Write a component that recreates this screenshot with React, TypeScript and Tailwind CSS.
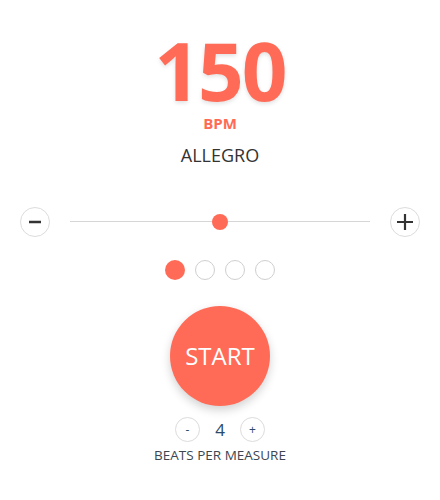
import { useState } from "react";

// Metronome tempo screen
const ACCENT = "#ff6b57";

function RoundButton({ size, children }: { size: "lg" | "sm"; children: React.ReactNode }) {
  return (
    <button
      className={
        size === "lg"
          ? "flex h-[30px] w-[30px] items-center justify-center rounded-full border border-[#dcdcdc] bg-white text-[#333]"
          : "flex h-[25px] w-[25px] items-center justify-center rounded-full border border-[#dcdcdc] bg-white text-[12px] text-[#2c4a6b]"
      }
    >
      {children}
    </button>
  );
}

export default function App() {
  const [bpm] = useState(150);
  const [beats] = useState(4);
  const min = 40;
  const max = 260;
  const pct = ((bpm - min) / (max - min)) * 100;

  return (
    <div className="flex h-[500px] w-[440px] flex-col items-center bg-white font-['Open_Sans',sans-serif]">
      {/* tempo */}
      <div className="mt-[34px] text-[80px] font-bold leading-[72px] tracking-[-2px] text-[#ff6b57] [text-shadow:0_2px_4px_rgba(0,0,0,0.12)]">
        {bpm}
      </div>
      <div className="mt-[10px] text-[15px] font-bold leading-none text-[#ff6b57]">BPM</div>
      <div className="mt-[15px] text-[18px] leading-none text-[#333]">ALLEGRO</div>

      {/* slider */}
      <div className="mt-[43px] flex w-full items-center px-[20px]">
        <RoundButton size="lg">
          <svg width="14" height="14" viewBox="0 0 14 14">
            <path d="M1 7h12" stroke="#333" strokeWidth="2.5" />
          </svg>
        </RoundButton>
        <div className="relative mx-[20px] h-[16px] flex-1">
          <div className="absolute left-0 right-0 top-[7px] h-px bg-[#d6d6d6]" />
          <div
            className="absolute top-0 h-[16px] w-[16px] -translate-x-1/2 rounded-full"
            style={{ left: `${pct}%`, backgroundColor: ACCENT }}
          />
        </div>
        <RoundButton size="lg">
          <svg width="18" height="18" viewBox="0 0 18 18">
            <path d="M1 9h16M9 1v16" stroke="#333" strokeWidth="2.2" />
          </svg>
        </RoundButton>
      </div>

      {/* beat indicators */}
      <div className="mt-[23px] flex gap-[10px]">
        {Array.from({ length: beats }).map((_, i) => (
          <div
            key={i}
            className={
              i === 0
                ? "h-[20px] w-[20px] rounded-full bg-[#ff6b57]"
                : "h-[20px] w-[20px] rounded-full border border-[#cfcfcf] bg-white"
            }
          />
        ))}
      </div>

      {/* start */}
      <button className="mt-[26px] flex h-[100px] w-[100px] items-center justify-center rounded-full bg-[#ff6b57] text-[24px] text-white shadow-[0_4px_10px_rgba(0,0,0,0.18)]">
        START
      </button>

      {/* beats per measure */}
      <div className="mt-[11px] flex items-center gap-[13px]">
        <RoundButton size="sm">-</RoundButton>
        <span className="w-[14px] text-center text-[17px] text-[#2c4a6b]">{beats}</span>
        <RoundButton size="sm">+</RoundButton>
      </div>
      <div className="mt-[3px] text-[13.5px] leading-[18px] text-[#3d4650]">BEATS PER MEASURE</div>
    </div>
  );
}
